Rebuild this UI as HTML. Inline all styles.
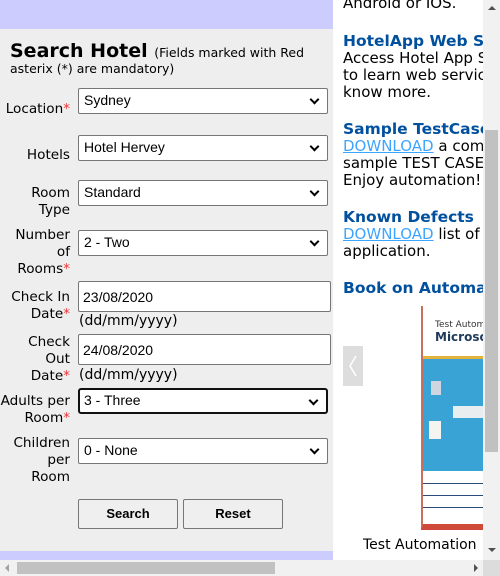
<!DOCTYPE html>
<html><head><meta charset="utf-8"><style>
*{margin:0;padding:0;box-sizing:border-box}
html,body{width:500px;height:576px;overflow:hidden}
body{position:relative;background:#fff;font-family:"DejaVu Sans","Liberation Sans",sans-serif;}
.a{position:absolute;white-space:nowrap}
#left{position:absolute;left:0;top:0;width:333px;height:560px;background:#eee}
.band{position:absolute;left:0;width:333px;background:#ccccff}
.lbl{position:absolute;right:430px;text-align:right;font-size:13.6px;line-height:17px;color:#000;white-space:nowrap}
.r{color:#e33}
.sel{position:absolute;left:78px;width:250px;height:26px;border:1px solid #767676;border-radius:2px;background:#fff;font-family:"Liberation Sans",sans-serif;font-size:14px;padding:3px 0 0 5px;color:#000}
.sel:after{content:"";position:absolute;right:9px;top:7px;width:5px;height:5px;border-right:2px solid #000;border-bottom:2px solid #000;transform:rotate(45deg)}
.inp{position:absolute;left:78px;width:253px;height:31px;border:1px solid #767676;border-radius:2px;background:#fff;font-family:"Liberation Sans",sans-serif;font-size:14px;padding:7px 0 0 4px}
.hint{position:absolute;left:79px;font-size:14px}
.btn{position:absolute;top:499px;height:30px;width:100px;border:1px solid #767676;border-radius:2px;background:#efefef;font-family:"Liberation Sans",sans-serif;font-weight:bold;font-size:13px;text-align:center;line-height:28px}
#right{position:absolute;left:333px;top:0;width:150px;height:560px;overflow:hidden}
.rt{position:absolute;left:10px;font-size:15px;line-height:17px;color:#000;white-space:nowrap}
.h{color:#00509e;font-weight:bold;font-size:15.5px}
.lk{color:#3da5ff;text-decoration:underline}
</style></head><body>
<div id="left"></div>
<div class="band" style="top:0;height:29px"></div>
<div class="band" style="top:551px;height:9px"></div>
<div class="a" style="left:10px;top:40px;font-size:19px;font-weight:bold">Search Hotel <span style="font-size:12.5px;font-weight:normal">(Fields marked with Red</span></div>
<div class="a" style="left:10px;top:61px;font-size:12.5px">asterix (*) are mandatory)</div>

<div class="lbl" style="top:101px">Location<span class="r">*</span></div>
<div class="sel" style="top:88px">Sydney</div>
<div class="lbl" style="top:147px">Hotels</div>
<div class="sel" style="top:135px">Hotel Hervey</div>
<div class="lbl" style="top:185px">Room<br>Type</div>
<div class="sel" style="top:180px">Standard</div>
<div class="lbl" style="top:227px">Number<br>of<br>Rooms<span class="r">*</span></div>
<div class="sel" style="top:230px">2 - Two</div>
<div class="lbl" style="top:289px">Check In<br>Date<span class="r">*</span></div>
<div class="inp" style="top:281px">23/08/2020</div>
<div class="hint" style="top:313px">(dd/mm/yyyy)</div>
<div class="lbl" style="top:334px">Check<br>Out<br>Date<span class="r">*</span></div>
<div class="inp" style="top:334px">24/08/2020</div>
<div class="hint" style="top:367px">(dd/mm/yyyy)</div>
<div class="lbl" style="top:393px">Adults per<br>Room<span class="r">*</span></div>
<div class="sel" style="top:388px;border:2px solid #111;border-radius:3px;padding:2px 0 0 4px">3 - Three</div>
<div class="lbl" style="top:435px">Children<br>per<br>Room</div>
<div class="sel" style="top:438px">0 - None</div>
<div class="btn" style="left:78px">Search</div>
<div class="btn" style="left:183px">Reset</div>

<div id="right">
<div class="rt" style="top:-5px">Android or IOS.</div>
<div class="rt h" style="top:33px">HotelApp Web Services</div>
<div class="rt" style="top:50px">Access Hotel App SOAP<br>to learn web services<br>know more.</div>
<div class="rt h" style="top:121px">Sample TestCases</div>
<div class="rt" style="top:138px"><span class="lk">DOWNLOAD</span> a complete<br>sample TEST CASES<br>Enjoy automation!</div>
<div class="rt h" style="top:209px">Known Defects</div>
<div class="rt" style="top:226px"><span class="lk">DOWNLOAD</span> list of known<br>application.</div>
<div class="rt h" style="top:280px">Book on Automation</div>
<div class="a" style="left:10px;top:346px;width:20px;height:40px;background:#ddd"></div>
<svg class="a" style="left:10px;top:346px" width="20" height="40"><path d="M13 10 L7 20 L13 30" fill="none" stroke="#fff" stroke-width="1.5"/></svg>
<div class="a" style="left:88px;top:306px;width:62px;height:224px;background:#fff;border-left:2px solid #c87060;border-bottom:6px solid #d04a3a;overflow:hidden">
 <div class="a" style="left:12px;top:14px;font-size:9px;color:#333">Test Autom</div>
 <div class="a" style="left:12px;top:24px;font-size:12px;font-weight:bold;color:#1e3a5a">Microso</div>
 <div class="a" style="left:0;top:50px;width:62px;height:3px;background:#e3b23c"></div>
 <div class="a" style="left:0;top:53px;width:62px;height:112px;background:#3aa3d6"></div>
 <div class="a" style="left:8px;top:75px;width:10px;height:14px;background:#cfd6e0"></div>
 <div class="a" style="left:30px;top:100px;width:30px;height:12px;background:#e8eef0"></div>
 <div class="a" style="left:6px;top:115px;width:12px;height:18px;background:#f4f4f0"></div>
 <div class="a" style="left:0;top:168px;width:62px;height:10px;border-bottom:1px solid #2a4a7a"></div>
 <div class="a" style="left:0;top:180px;width:62px;height:10px;border-bottom:1px solid #2a4a7a"></div>
 <div class="a" style="left:0;top:192px;width:62px;height:10px;border-bottom:1px solid #2a4a7a"></div>
</div>
<div class="rt" style="left:30px;top:537px;font-size:14px">Test Automation</div>
</div>

<div class="a" style="left:483px;top:0;width:17px;height:560px;background:#f1f1f1"></div>
<div class="a" style="left:485px;top:130px;width:13px;height:322px;background:#c1c1c1"></div>
<div class="a" style="left:488px;top:6px;width:0;height:0;border-left:4px solid transparent;border-right:4px solid transparent;border-bottom:4px solid #505050"></div>
<div class="a" style="left:488px;top:548px;width:0;height:0;border-left:4px solid transparent;border-right:4px solid transparent;border-top:4px solid #505050"></div>
<div class="a" style="left:0;top:560px;width:500px;height:16px;background:#f1f1f1"></div>
<div class="a" style="left:17px;top:562px;width:258px;height:12px;background:#c1c1c1"></div>
<div class="a" style="left:5px;top:564px;width:0;height:0;border-top:4px solid transparent;border-bottom:4px solid transparent;border-right:4px solid #a3a3a3"></div>
<div class="a" style="left:474px;top:564px;width:0;height:0;border-top:4px solid transparent;border-bottom:4px solid transparent;border-left:4px solid #505050"></div>
<div class="a" style="left:483px;top:560px;width:17px;height:16px;background:#dcdcdc"></div>
</body></html>
